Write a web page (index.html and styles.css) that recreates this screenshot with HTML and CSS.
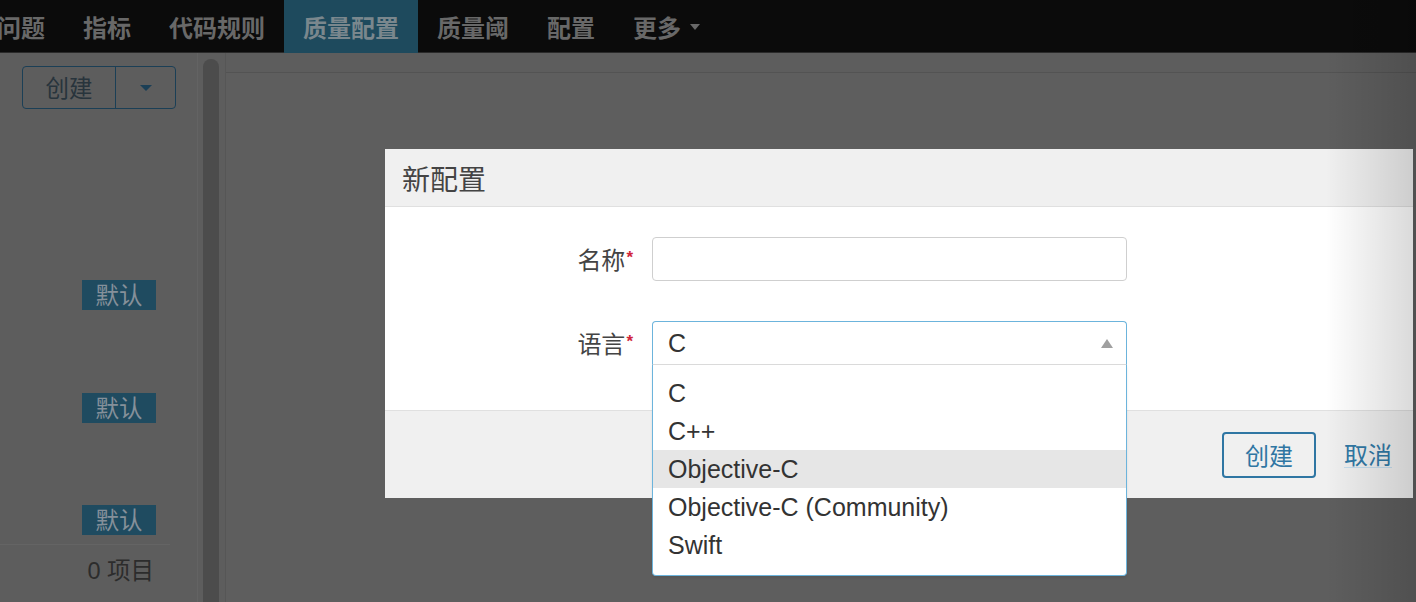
FILE: index.html
```html
<!DOCTYPE html>
<html lang="zh-CN">
<head>
<meta charset="utf-8">
<title>质量配置</title>
<link rel="stylesheet" href="styles.css">
</head>
<body>
<header class="topnav">
  <ul class="topnav-list">
    <li class="topnav-item">问题</li>
    <li class="topnav-item">指标</li>
    <li class="topnav-item">代码规则</li>
    <li class="topnav-item is-active">质量配置</li>
    <li class="topnav-item">质量阈</li>
    <li class="topnav-item">配置</li>
    <li class="topnav-item">更多<svg class="topnav-caret" width="10" height="6" viewBox="0 0 10 6"><polygon points="0,0 10,0 5,6"/></svg></li>
  </ul>
</header>
<main class="page">
  <aside class="sidebar">
    <div class="split-btn">
      <span class="split-btn-main">创建</span>
      <span class="split-btn-toggle"><svg width="12" height="6" viewBox="0 0 12 6"><polygon points="0,0 12,0 6,6"/></svg></span>
    </div>
    <ul class="profile-list">
      <li class="profile-row"><span class="badge">默认</span></li>
      <li class="profile-row"><span class="badge">默认</span></li>
      <li class="profile-row"><span class="badge">默认</span></li>
    </ul>
    <div class="sidebar-footer">0 项目</div>
  </aside>
  <div class="scroll-track"><div class="scroll-thumb"></div></div>
  <section class="content"></section>
</main>

<div class="modal">
  <div class="modal-header">新配置</div>
  <div class="modal-body">
    <div class="form-row">
      <label class="form-label">名称<span class="required">*</span></label>
      <div class="text-input"></div>
    </div>
    <div class="form-row">
      <label class="form-label">语言<span class="required">*</span></label>
      <div class="select">
        <div class="select-control">
          <span class="select-value">C</span>
          <svg class="select-arrow" width="12" height="9" viewBox="0 0 12 9"><polygon points="0,9 6,0 12,9"/></svg>
        </div>
        <ul class="select-menu">
          <li class="select-option">C</li>
          <li class="select-option">C++</li>
          <li class="select-option is-focused">Objective-C</li>
          <li class="select-option">Objective-C (Community)</li>
          <li class="select-option">Swift</li>
        </ul>
      </div>
    </div>
  </div>
  <div class="modal-footer">
    <button class="btn-create">创建</button>
    <a class="link-cancel">取消</a>
  </div>
</div>
<div class="edge-shade"></div>
</body>
</html>
```
FILE: styles.css
```css
* { box-sizing: border-box; }
html, body {
  margin: 0;
  padding: 0;
  height: 100%;
}
body {
  background: #5d5d5d;
  font-family: "Liberation Sans", "Noto Sans CJK SC", sans-serif;
  overflow: hidden;
  position: relative;
}

/* top navigation */
.topnav {
  height: 53px;
  background: #0b0b0b;
  border-bottom: 1px solid #2a2a2a;
}
.topnav-list {
  list-style: none;
  margin: 0 0 0 -22px;
  padding: 0;
  display: flex;
  height: 52px;
}
.topnav-item {
  display: flex;
  align-items: center;
  padding: 0 19px;
  height: 53px;
  font-family: "Noto Sans CJK SC", sans-serif;
  font-size: 24px;
  font-weight: 700;
  color: #686868;
  line-height: 1;
}
.topnav-item.is-active {
  background: #1e4a5d;
  color: #7a878d;
}
.topnav-caret {
  margin-left: 9px;
  fill: #686868;
}

/* page under the modal */
.page {
  display: flex;
  height: calc(100% - 53px);
}
.sidebar {
  width: 198px;
  border-right: 1px solid #636363;
  display: flex;
  flex-direction: column;
  padding-top: 13px;
}
.split-btn {
  display: flex;
  margin-left: 22px;
  width: 154px;
  height: 43px;
  border: 1.5px solid #1b3f56;
  border-radius: 4px;
}
.split-btn-main {
  width: 93px;
  display: flex;
  align-items: center;
  justify-content: center;
  border-right: 1.5px solid #1b3f56;
  font-family: "Noto Sans CJK SC", sans-serif;
  font-size: 23.5px;
  color: #28343c;
  line-height: 1;
}
.split-btn-toggle {
  flex: 1;
  display: flex;
  align-items: center;
  justify-content: center;
  fill: #1b3f56;
}
.profile-list {
  list-style: none;
  margin: 171px 0 0;
  padding: 0;
  display: flex;
  flex-direction: column;
  gap: 82.5px;
}
.profile-row {
  display: flex;
  padding-left: 82px;
}
.badge {
  width: 74px;
  height: 30px;
  display: flex;
  align-items: center;
  justify-content: center;
  background: #1f4b60;
  color: #85909a;
  font-family: "Noto Sans CJK SC", sans-serif;
  font-size: 23.5px;
  line-height: 1;
}
.sidebar-footer {
  margin-top: 9px;
  width: 170px;
  border-top: 1px solid #646464;
  padding: 10px 16px 0 0;
  text-align: right;
  font-family: "Liberation Sans", "Noto Sans CJK SC", sans-serif;
  font-size: 23.5px;
  line-height: 32px;
  color: #2c2c2c;
}
.scroll-track {
  width: 28px;
  border-right: 1px solid #565656;
  padding: 6px 0 0 5px;
}
.scroll-thumb {
  width: 16px;
  height: 100%;
  background: #4c4c4c;
  border-radius: 8px 8px 0 0;
}
.content {
  flex: 1;
  margin-top: 19px;
  border-top: 1px solid #535353;
  background: #5e5e5e;
}

/* modal */
.modal {
  position: absolute;
  left: 385px;
  top: 149px;
  width: 1028px;
  background: #fff;
  z-index: 10;
}
.modal-header {
  height: 58px;
  border-bottom: 1px solid #e0e0e0;
  background: #f0f0f0;
  padding-left: 17px;
  display: flex;
  align-items: center;
  font-family: "Noto Sans CJK SC", sans-serif;
  font-size: 28px;
  color: #444;
  line-height: 1;
}
.modal-body {
  height: 203px;
  padding-top: 30px;
}
.form-row {
  display: grid;
  grid-template-columns: 248px 475px;
  column-gap: 19px;
  align-items: center;
}
.form-row + .form-row {
  margin-top: 40px;
}
.form-label {
  text-align: right;
  font-family: "Noto Sans CJK SC", sans-serif;
  font-size: 24px;
  color: #444;
  line-height: 1;
}
.required {
  color: #d0253a;
  font-family: "Liberation Sans", sans-serif;
  font-size: 17px;
  font-weight: 700;
  vertical-align: 6px;
  margin-left: 1px;
}
.text-input {
  height: 44px;
  border: 1px solid #cfcfcf;
  border-radius: 4px;
  background: #fff;
}
.select {
  position: relative;
}
.select-control {
  height: 44px;
  border: 1px solid #6cb4dc;
  border-bottom-color: #dadada;
  border-radius: 4px 4px 0 0;
  display: flex;
  align-items: center;
  justify-content: space-between;
  padding: 0 13px 0 15px;
}
.select-value {
  font-size: 25px;
  color: #333;
  line-height: 1;
}
.select-arrow {
  fill: #a0a0a0;
}
.select-menu {
  position: absolute;
  top: 100%;
  left: 0;
  right: 0;
  margin: 0;
  list-style: none;
  background: #fff;
  border: 1px solid #6cb4dc;
  border-top: 0;
  border-radius: 0 0 4px 4px;
  padding: 9px 0 11px;
  box-shadow: 0 2px 3px rgba(0, 0, 0, 0.08);
  z-index: 2;
}
.select-option {
  height: 38px;
  line-height: 38px;
  padding-left: 15px;
  font-size: 25px;
  color: #333;
}
.select-option.is-focused {
  background: #e6e6e6;
}
.modal-footer {
  height: 88px;
  border-top: 1px solid #e0e0e0;
  background: #f0f0f0;
  display: flex;
  justify-content: flex-end;
  align-items: center;
  gap: 28px;
  padding-right: 21px;
}
.btn-create {
  width: 94px;
  height: 46px;
  border: 2px solid #2f76a3;
  border-radius: 4px;
  background: transparent;
  color: #2f76a3;
  font-family: "Noto Sans CJK SC", sans-serif;
  font-size: 24px;
  line-height: 1;
  padding: 0;
}
.link-cancel {
  color: #3179a6;
  border-bottom: 1px solid #c5deee;
  font-family: "Noto Sans CJK SC", sans-serif;
  font-size: 24px;
  line-height: 1.05;
}
.edge-shade {
  position: absolute;
  top: 0;
  right: 0;
  width: 90px;
  height: 100%;
  background: linear-gradient(to right, rgba(0, 0, 0, 0), rgba(0, 0, 0, 0.15));
  pointer-events: none;
  z-index: 20;
}
```
